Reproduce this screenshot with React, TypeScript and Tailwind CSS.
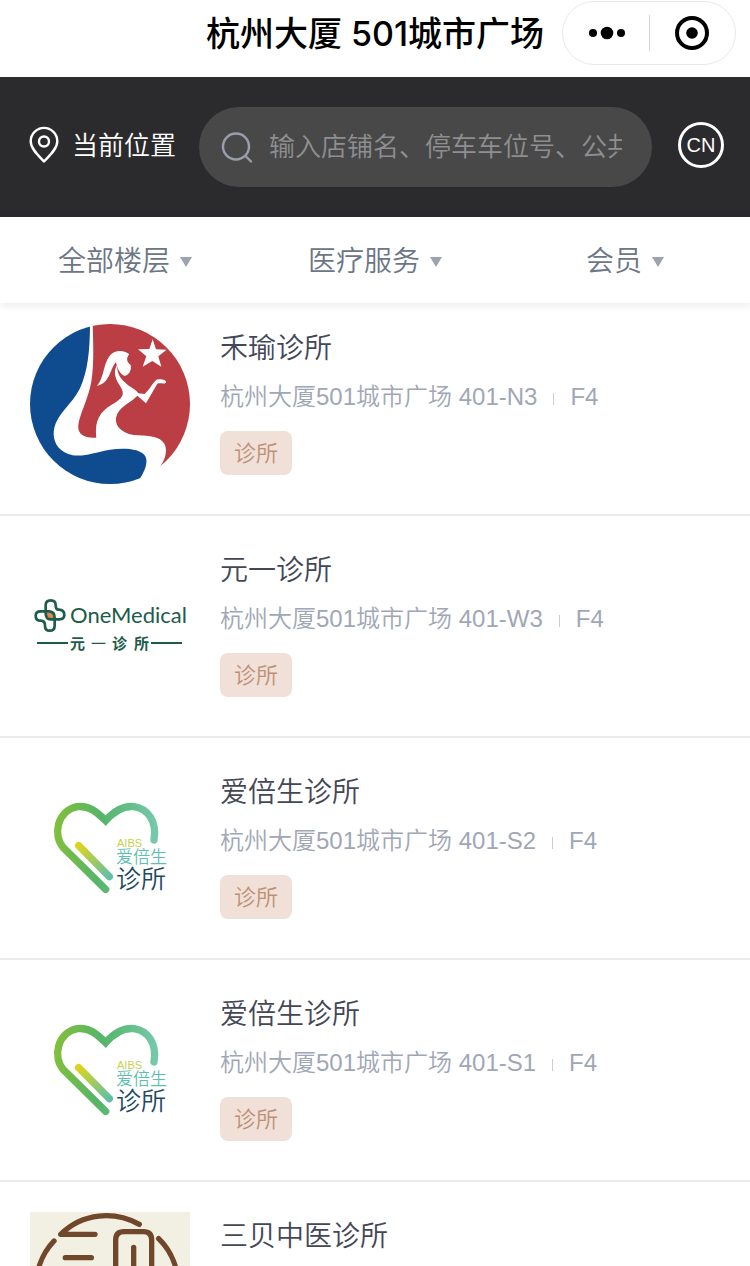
import React from "react";

const sans = "font-['Liberation_Sans','Noto_Sans_CJK_SC',sans-serif]";

function HeyuLogo() {
  const id = React.useId();
  return (
    <svg viewBox="30 27 480 480" className="size-40" role="img" aria-label="禾瑜诊所">
      <clipPath id={id}>
        <circle cx="270" cy="267" r="240" />
      </clipPath>
      <g clipPath={`url(#${id})`}>
        <path
          fill="#0f4c8f"
          d="M210 20H20V520H345L358 493C375 468 385 440 376 424C362 400 310 399 270 404C230 410 200 425 158 421C120 414 100 385 101 355C104 300 152 275 180 220C205 165 210 100 210 20Z"
        />
        <path
          fill="#ba3e43"
          d="M218 20H520V480H410L420 455C440 430 442 400 432 385C415 358 370 364 340 360C300 352 285 330 288 308C295 275 330 265 352 242L378 265L412 206C420 203 430 208 438 203C441 196 425 190 410 194C400 200 390 222 374 237L355 235C342 218 325 215 315 202C300 190 292 175 291 150C278 172 288 195 297 208C315 235 312 245 285 263C245 285 222 310 229 368C190 371 172 355 175 330C178 300 205 250 214 200C222 150 220 90 218 20Z"
        />
      </g>
      <path
        fill="#fff"
        d="M231 212C255 190 248 130 282 112C300 104 318 109 328 118C321 126 316 138 332 150C336 165 325 184 312 182C300 178 292 160 288 142C272 155 270 208 231 212Z"
      />
      <path
        fill="#fff"
        d="M398 73L408 103L440 104L415 124L424 155L397 138L368 155L379 124L354 103L388 102Z"
      />
    </svg>
  );
}

function OneMedicalLogo() {
  return (
    <svg viewBox="0 0 160 160" className="size-40" role="img" aria-label="OneMedical 元一诊所">
      <g transform="translate(-10 39) scale(0.3333)" fill="none" stroke="#1d5c49" strokeWidth="8" strokeLinejoin="round">
        <path fill="#e08452" stroke="none" d="M78 82H94Q103 84 103 100H90Q78 98 78 82Z" />
        <path d="M77 76V61Q77 46 92 46Q107 46 107 60Q107 74 116 74Q133 74 133 90Q133 103 118 103H92Q77 103 77 84Z" />
        <path d="M104 104V122Q104 137 89 137Q75 137 75 122Q75 107 62 107Q47 107 47 92Q47 79 62 79H88Q104 80 104 98Z" />
      </g>
      <text x="40" y="77" fontSize="22" fill="#1d5c49" className="font-['Lato',sans-serif]">
        OneMedical
      </text>
      <path d="M7 97H38M121 97H152" stroke="#1d5c49" strokeWidth="2" />
      <g fill="#1d5c49" fontSize="15" fontWeight="700" className="font-['Noto_Sans_CJK_SC',sans-serif]">
        <text x="40" y="103">元</text>
        <text x="61" y="103" fontWeight="400">一</text>
        <text x="82" y="103">诊</text>
        <text x="104" y="103">所</text>
      </g>
    </svg>
  );
}

function AibsLogo() {
  const id = React.useId();
  return (
    <svg viewBox="0 0 160 160" className="size-40" role="img" aria-label="AIBS 爱倍生诊所">
      <defs>
        <linearGradient id={id + "h"} gradientUnits="userSpaceOnUse" x1="45" y1="100" x2="350" y2="120">
          <stop offset="0" stopColor="#82bf3b" />
          <stop offset="0.45" stopColor="#55b567" />
          <stop offset="1" stopColor="#76c8ad" />
        </linearGradient>
        <linearGradient id={id + "s"} gradientUnits="userSpaceOnUse" x1="115" y1="166" x2="208" y2="262">
          <stop offset="0" stopColor="#dcd51e" />
          <stop offset="1" stopColor="#5fc0a6" />
        </linearGradient>
      </defs>
      <g transform="translate(10 22) scale(0.3333)" fill="none" strokeWidth="22">
        <path
          d="M197 298L70 173C38 138 50 62 112 50C150 46 172 68 197 92C222 64 248 46 282 50C322 56 352 92 342 150"
          stroke={`url(#${id}h)`}
          strokeLinecap="round"
        />
        <path d="M116 167L208 260" stroke={`url(#${id}s)`} strokeLinecap="round" />
      </g>
      <g className="font-['Liberation_Sans','Noto_Sans_CJK_SC',sans-serif]">
        <text x="87" y="79" fontSize="11" fill="#c5d24b">AIBS</text>
        <text x="86" y="95" fontSize="17" fontWeight="350" fill="#5dbfae">爱倍生</text>
        <text x="86" y="120" fontSize="25" fontWeight="350" fill="#1c4a63">诊所</text>
      </g>
    </svg>
  );
}

function SanbeiLogo() {
  return (
    <svg viewBox="92 126 480 480" className="size-40" role="img" aria-label="三贝中医诊所">
      <path fill="#f2efe3" d="M92 126h480v480H92Z" />
      <g fill="none" stroke="#70472a" strokeWidth="16" strokeLinecap="round" strokeLinejoin="round">
        <path d="M287 193H184C250 128 345 122 420 163" />
        <path d="M198 263H276M184 333H288" />
        <path d="M349 380V210Q349 185 374 185H432Q457 185 457 210V380M403 232V330" />
        <path d="M164 213C90 290 90 430 170 510C250 590 390 590 470 510C560 420 555 280 478 206" />
      </g>
    </svg>
  );
}

type Shop = { id: number; name: string; unit?: string; Logo: () => React.ReactElement };

const shops: Shop[] = [
  { id: 1, name: "禾瑜诊所", unit: "401-N3", Logo: HeyuLogo },
  { id: 2, name: "元一诊所", unit: "401-W3", Logo: OneMedicalLogo },
  { id: 3, name: "爱倍生诊所", unit: "401-S2", Logo: AibsLogo },
  { id: 4, name: "爱倍生诊所", unit: "401-S1", Logo: AibsLogo },
  { id: 5, name: "三贝中医诊所", Logo: SanbeiLogo },
];

export default function App() {
  return (
    <div className={`flex h-screen flex-col overflow-hidden bg-white ${sans}`}>
      <header className="grid h-[77px] shrink-0 grid-cols-[1fr_auto_1fr] items-start">
        <h1 className="col-start-2 pt-[9px] font-['Inter','Noto_Sans_CJK_SC',sans-serif] text-[34px] leading-[50px] font-medium whitespace-nowrap text-black">
          杭州大厦 501城市广场
        </h1>
        <div className="mt-px mr-3.5 flex h-16 w-[174px] items-center justify-self-end rounded-full border border-[#e9e9e9]">
          <button type="button" aria-label="更多" className="flex flex-1 justify-center">
            <svg viewBox="0 0 40 16" className="h-4 w-10">
              <circle cx="7" cy="8" r="4" />
              <circle cx="21" cy="8" r="6.3" />
              <circle cx="35" cy="8" r="4" />
            </svg>
          </button>
          <span className="h-9 w-px bg-[#d4d4d4]" />
          <button type="button" aria-label="关闭" className="flex flex-1 justify-center">
            <svg viewBox="0 0 36 36" className="size-9">
              <circle cx="18" cy="18" r="15" fill="none" stroke="#000" strokeWidth="4" />
              <circle cx="18" cy="18" r="5.8" />
            </svg>
          </button>
        </div>
      </header>

      <div className="flex h-[140px] shrink-0 items-center bg-[#2b2b2d] pr-[26px] pl-7 text-white">
        <button type="button" className="mb-1 flex shrink-0 items-center gap-3">
          <svg viewBox="0 0 32 38" className="h-[38px] w-8" fill="none" stroke="#fff" strokeWidth="2.4" strokeLinejoin="round">
            <path d="M16 35.5C11 30 2.7 23 2.7 15.2A13.3 13.3 0 0 1 29.3 15.2C29.3 23 21 30 16 35.5Z" />
            <circle cx="16" cy="15.5" r="5" />
          </svg>
          <span className="pt-0.5 text-[26px] leading-10 font-[350]">当前位置</span>
        </button>
        <label className="ml-[23px] flex h-20 min-w-0 flex-1 items-center gap-4 rounded-full bg-[#484849] pr-[30px] pl-[22px]">
          <svg viewBox="0 0 32 32" className="size-8 shrink-0" fill="none" stroke="#9a9eaa" strokeWidth="2.4" strokeLinecap="round">
            <circle cx="15" cy="15.5" r="13" />
            <path d="M24.5 25L30 30.5" />
          </svg>
          <input
            type="text"
            aria-label="搜索"
            placeholder="输入店铺名、停车车位号、公共设施"
            className="h-10 min-w-0 flex-1 bg-transparent text-[26px] font-[350] text-white outline-none placeholder:text-[#8f8f91]"
          />
        </label>
        <button
          type="button"
          className="mb-1 ml-[26px] flex size-[46px] shrink-0 items-center justify-center rounded-full border-3 border-white text-xl leading-none"
        >
          CN
        </button>
      </div>

      <nav className="relative z-10 grid h-[86px] shrink-0 grid-cols-3 bg-white pt-1 shadow-[0_3px_8px_rgba(0,0,0,0.08)]">
        {["全部楼层", "医疗服务", "会员"].map((label) => (
          <button key={label} type="button" className="flex items-center justify-center gap-2.5 text-[28px] font-[350] text-[#6b7686]">
            {label}
            <svg viewBox="0 0 12 10" className="h-2.5 w-3" fill="#9ca4b0">
              <path d="M0 0H12L6 10Z" />
            </svg>
          </button>
        ))}
      </nav>

      <ul className="-mt-[9px] min-h-0 flex-1 overflow-y-auto [scrollbar-width:none]">
        {shops.map(({ id, name, unit, Logo }) => (
          <li key={id} className="border-b-2 border-[#ebebed]">
            <a href="#" className="flex gap-[30px] p-[30px]">
              <div className="shrink-0">
                <Logo />
              </div>
              <div className="flex min-w-0 flex-col items-start">
                <h2 className="text-[28px] leading-[50px] font-[350] text-[#434756]">{name}</h2>
                {unit && (
                  <>
                    <p className="mt-[3px] flex items-center text-2xl leading-10 font-[350] whitespace-nowrap text-[#9fa7b6]">
                      <span>杭州大厦501城市广场 {unit}</span>
                      <span className="mx-4 mt-1 h-3 w-px bg-[#c9ced6]" />
                      <span>F4</span>
                    </p>
                    <span className="mt-3.5 rounded-lg bg-[#f0e0d8] px-3.5 pt-0.5 text-[22px] leading-[42px] font-[350] text-[#bd9075]">
                      诊所
                    </span>
                  </>
                )}
              </div>
            </a>
          </li>
        ))}
      </ul>
    </div>
  );
}
